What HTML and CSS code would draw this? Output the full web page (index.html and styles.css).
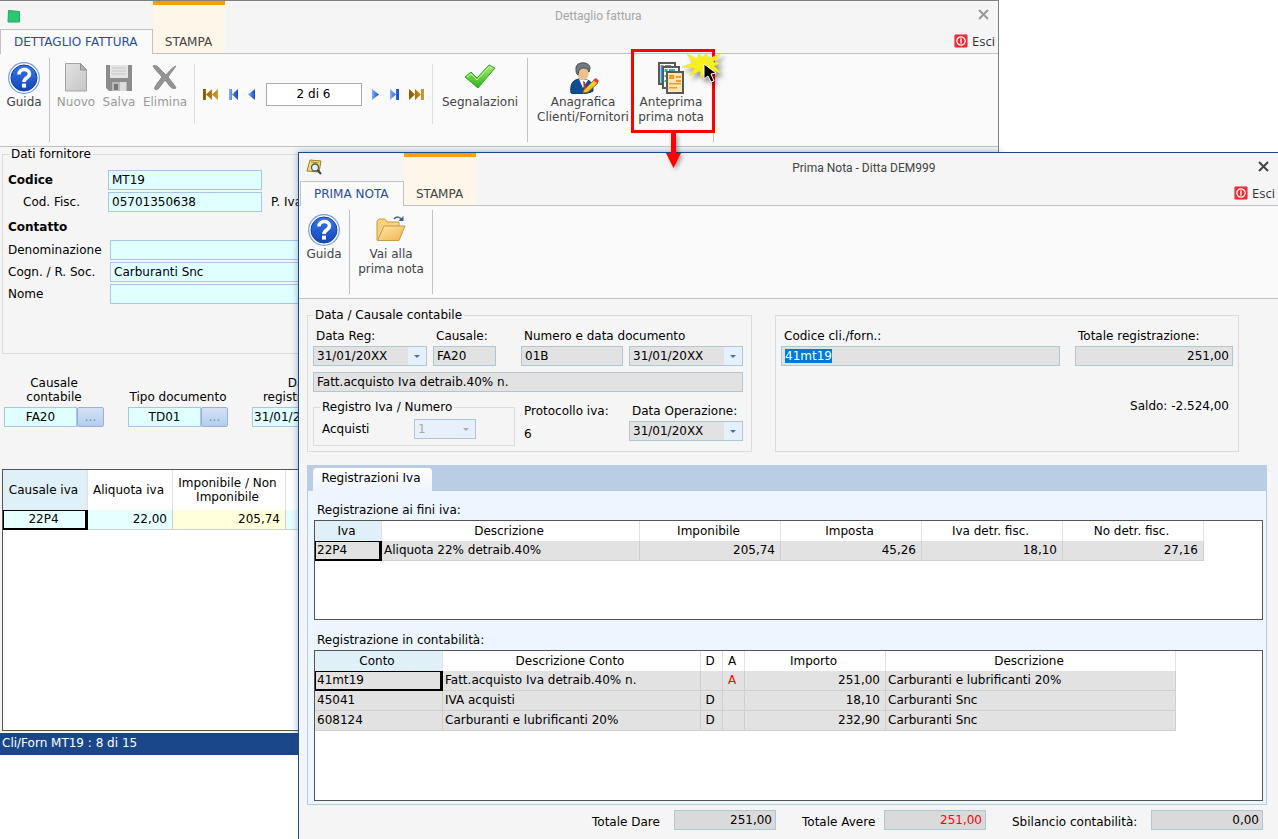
FILE: index.html
```html
<!DOCTYPE html>
<html lang="it">
<head>
    <meta charset="UTF-8">
    <meta name="viewport" content="width=device-width, initial-scale=1.0">
    <title>Prima Nota - Ditta DEM999</title>
    <link rel="stylesheet" href="styles.css">
</head>
<body>
<svg class="defs" width="0" height="0" aria-hidden="true">
    <defs>
        <linearGradient id="blueBall" x1="0" y1="0" x2="0" y2="1">
            <stop offset="0" stop-color="#3a78e6"/><stop offset="1" stop-color="#1144bd"/>
        </linearGradient>
        <linearGradient id="greyDoc" x1="0" y1="0" x2="1" y2="1">
            <stop offset="0" stop-color="#e2e2e2"/><stop offset="1" stop-color="#c6c6c6"/>
        </linearGradient>
        <linearGradient id="green" x1="0" y1="0" x2="0" y2="1">
            <stop offset="0" stop-color="#a5ec6c"/><stop offset="1" stop-color="#2db51c"/>
        </linearGradient>
        <linearGradient id="navBlue" x1="0" y1="0" x2="1" y2="0">
            <stop offset="0" stop-color="#7db0ff"/><stop offset="1" stop-color="#1348c8"/>
        </linearGradient>
        <linearGradient id="navGold" x1="0" y1="0" x2="1" y2="0">
            <stop offset="0" stop-color="#8a5800"/><stop offset="1" stop-color="#d79a26"/>
        </linearGradient>
        <linearGradient id="folder" x1="0" y1="0" x2="1" y2="1">
            <stop offset="0" stop-color="#ffe9a8"/><stop offset="1" stop-color="#f0b350"/>
        </linearGradient>
        <symbol id="i-help" viewBox="0 0 32 32">
            <circle cx="16" cy="16" r="15.3" fill="#fff" stroke="#6f9be6" stroke-width="1.2"/>
            <circle cx="16" cy="16" r="13" fill="url(#blueBall)" stroke="#173f9e" stroke-width="1"/>
            <path d="M11 12.500c0-6.500 10.500-6.500 10.500-.5 0 4-5.500 3.500-5.500 8" fill="none" stroke="#fff" stroke-width="3.600"/>
            <rect x="14" y="21.600" width="4" height="4" fill="#fff"/>
        </symbol>
        <symbol id="i-power" viewBox="0 0 14 14">
            <rect x=".5" y=".5" width="13" height="13" rx="1.5" fill="#ee2a30" stroke="#e58a8c"/>
            <circle cx="7" cy="7" r="4.2" fill="none" stroke="#fff" stroke-width="1.2"/>
            <path d="M7 4.5v5" stroke="#fff" stroke-width="1.4"/>
        </symbol>
        <symbol id="i-close" viewBox="0 0 11 11">
            <path d="M1 1l9 9M10 1l-9 9" stroke="currentColor" stroke-width="2" fill="none"/>
        </symbol>
    </defs>
</svg>

<main class="desktop">
    <!-- invoice detail -->
    <section class="window window-back">
        <header class="head">
            <div class="head-left">
                <svg class="app-icon" viewBox="0 0 16 16"><path d="M2.500 3.500L13.500 4.500V15H2z" fill="#2dc673" stroke="#25a75f"/></svg>
                <button class="tab active">DETTAGLIO FATTURA</button>
            </div>
            <button class="tab stampa">STAMPA</button>
            <h1 class="title">Dettaglio fattura</h1>
            <div class="head-right">
                <button class="close" aria-label="Chiudi"><svg><use href="#i-close"/></svg></button>
                <button class="esci"><svg><use href="#i-power"/></svg>Esci</button>
            </div>
        </header>
        <nav class="ribbon">
            <button class="tool w-guida"><svg><use href="#i-help"/></svg>Guida</button>
            <i class="sep"></i>
            <div class="group">
                <button class="tool w-nuovo" disabled>
                    <svg viewBox="0 0 32 32"><path d="M5.500 1.500h15l6 6.500v21h-21z" fill="url(#greyDoc)" stroke="#a3a3a3"/><path d="M20.500 1.500V8h6z" fill="#b5b5b5" stroke="#8d8d8d"/></svg>Nuovo
                </button>
                <button class="tool w-salva" disabled>
                    <svg viewBox="0 0 32 32"><path d="M3 3h26v26H6l-3-3z" fill="#8c8c8c"/><path d="M7 3h18v13H7z" fill="#e4e4e4"/><path d="M9 6h14M9 9h14M9 12h14" stroke="#c4c4c4"/><path d="M9 20h15v9H9z" fill="#b9b9b9"/><path d="M11 22h4v6h-4z" fill="#777"/><path d="M17 20h6v9h-6z" fill="#dcdcdc"/></svg>Salva
                </button>
                <button class="tool w-elimina" disabled>
                    <svg viewBox="0 0 32 32"><path d="M4 4c3-1 5 0 7 3l6 6c4-5 7-8 10-9-3 4-6 8-8 11 3 4 6 7 8 11-3 1-5 0-7-3l-4-5c-3 4-5 7-7 9-2 1-4 1-3-2 2-4 5-7 7-10C10 11 6 8 4 4z" fill="#949494" stroke="#888"/></svg>Elimina
                </button>
            </div>
            <i class="sep light"></i>
            <div class="pager">
                <button aria-label="Primo"><svg width="15" height="13"><path d="M0 1h3v11H0zM3 6.500l6-5.500v11zM9 6.500L15 1v11z" fill="url(#navGold)"/></svg></button>
                <button aria-label="Indietro"><svg width="9" height="13"><path d="M0 1h3v11H0zM3 6.500L9 1v11z" fill="url(#navBlue)"/></svg></button>
                <button aria-label="Precedente"><svg width="7" height="13"><path d="M0 6.500L7 1v11z" fill="url(#navBlue)"/></svg></button>
                <input type="text" value="2 di 6" aria-label="Posizione">
                <button aria-label="Successivo"><svg width="7" height="13"><path d="M7 6.500L0 1v11z" fill="url(#navBlue)"/></svg></button>
                <button aria-label="Avanti"><svg width="9" height="13"><path d="M9 1H6v11h3zM6 6.500L0 1v11z" fill="url(#navBlue)"/></svg></button>
                <button aria-label="Ultimo"><svg width="15" height="13"><path d="M15 1h-3v11h3zM12 6.500L6 1v11zM6 6.500L0 1v11z" fill="url(#navGold)"/></svg></button>
            </div>
            <i class="sep light"></i>
            <button class="tool w-segnala">
                <svg viewBox="0 0 32 32"><path d="M1 15l6-5 6 6L25 3l6 3-17 20z" fill="url(#green)" stroke="#33a11f"/><path d="M3 15l4-3 6 6L25 5l3 1" fill="none" stroke="#d5fab8"/></svg>Segnalazioni
            </button>
            <i class="sep"></i>
            <button class="tool w-anagrafica">
                <svg viewBox="0 0 32 32"><path d="M4 31c-1-8 1-13 8-14l8 1c5 1 6 6 6 11-4 3-18 4-22 2z" fill="#0e4f93" stroke="#0a335f"/><path d="M12 17l4 9 5-8z" fill="#fff"/><path d="M16 19l2 1 1 6-2 2z" fill="#c62d2d"/><path d="M10 8c0-7 12-7 12 0 0 6-2 10-6 10s-6-4-6-10z" fill="#efc18a"/><path d="M9 7c-1-8 14-8 14-1l-1 4c-1-4-4-4-7-4l-3 2-1 5c-2-1-2-4-2-6z" fill="#6f7a82" stroke="#454e54"/><path d="M17 28L28 17l3 4-10 9-5 1z" fill="#f6c534" stroke="#a0720d"/><path d="M26 18l3-2 3 3-2 2z" fill="#e03a3a"/></svg>Anagrafica<br>Clienti/Fornitori
            </button>
            <button class="tool w-anteprima">
                <svg viewBox="0 0 32 32"><path d="M4 1h16v21H4z" fill="#fff" stroke="#58595b" stroke-width="2"/><path d="M5.500 3h3v18h-3zM10 3h6v2h-6z" fill="#3b9be0"/><path d="M8 5h16v21H8z" fill="#fff" stroke="#58595b" stroke-width="2"/><path d="M9.500 7h3v3h-3zM9.500 13h3v2h-3zM9.500 18h3v2h-3zM14 7h6v2h-6z" fill="#35b57b"/><path d="M12 10h16v21H12z" fill="#fde3ae" stroke="#58595b" stroke-width="2"/><path d="M14 13h5v4h-5zM21 14h5v2h-5zM21 18h5v2h-5zM14 21h12v1.500H14zM14 25h8v1.500h-8z" fill="#f79b1f"/></svg>Anteprima<br>prima nota
            </button>
            <i class="sep"></i>
        </nav>
        <div class="back-body">
            <fieldset class="box fornitore">
                <legend>Dati fornitore</legend>
                <div class="supplier">
                    <label class="strong" for="codice">Codice</label>
                    <input class="aqua" id="codice" value="MT19"><span></span>
                    <label class="indent" for="fisc">Cod. Fisc.</label>
                    <input class="aqua" id="fisc" value="05701350638"><span>P. Iva</span>
                </div>
                <div class="strong contatto">Contatto</div>
                <div class="contact">
                    <label for="denom">Denominazione</label>
                    <input class="aqua" id="denom">
                    <label for="cogn">Cogn. / R. Soc.</label>
                    <input class="aqua" id="cogn" value="Carburanti Snc">
                    <label for="nome">Nome</label>
                    <input class="aqua" id="nome">
                </div>
            </fieldset>
            <div class="doc-row">
                <div class="doc-field">
                    <label for="causale">Causale<br>contabile</label>
                    <div class="pick"><input class="aqua" id="causale" value="FA20"><button>...</button></div>
                </div>
                <div class="doc-field">
                    <label for="tipo">Tipo documento</label>
                    <div class="pick"><input class="aqua" id="tipo" value="TD01"><button>...</button></div>
                </div>
                <div class="doc-field">
                    <label for="datareg">Data<br>registrazione</label>
                    <div class="pick"><input class="aqua date" id="datareg" value="31/01/20XX"></div>
                </div>
            </div>
            <div class="grid back-grid">
                <table>
                    <tr><th class="sel c85">Causale iva</th><th class="c85">Aliquota iva</th><th class="c113">Imponibile / Non Imponibile</th><th class="c113"></th></tr>
                    <tr class="aqua-row"><td class="mid current">22P4</td><td class="num">22,00</td><td class="num yellow">205,74</td><td></td></tr>
                </table>
            </div>
        </div>
        <footer class="status">Cli/Forn MT19 : 8 di 15</footer>
    </section>

    <!-- journal entry preview -->
    <section class="window window-front">
        <header class="head">
            <div class="head-left">
                <svg class="app-icon" viewBox="0 0 16 16"><path d="M4 1l11 1-2 11L1 12z" fill="#f3dd78" stroke="#9b7e22"/><path d="M5 3l8 1" stroke="#a68a31"/><circle cx="9" cy="8.500" r="3.500" fill="#e2f1fb" stroke="#555" stroke-width="1.300"/><path d="M11.500 11L15 15" stroke="#444" stroke-width="2"/></svg>
                <button class="tab active">PRIMA NOTA</button>
            </div>
            <button class="tab stampa">STAMPA</button>
            <h1 class="title">Prima Nota - Ditta DEM999</h1>
            <div class="head-right">
                <button class="close" aria-label="Chiudi"><svg><use href="#i-close"/></svg></button>
                <button class="esci"><svg><use href="#i-power"/></svg>Esci</button>
            </div>
        </header>
        <nav class="ribbon">
            <button class="tool w-guida"><svg><use href="#i-help"/></svg>Guida</button>
            <i class="sep"></i>
            <button class="tool w-vai">
                <svg viewBox="0 0 32 32"><path d="M2 26V7l2-2h6l2 3h12v5" fill="#f8d27c" stroke="#c99a48"/><path d="M2.500 26.500L9 12h21l-6 14.500z" fill="url(#folder)" stroke="#c99a48"/><path d="M19 5c3-3 6-2 7 0" fill="none" stroke="#3d6185" stroke-width="1.500"/><path d="M28.500 2v5h-5z" fill="#3d6185"/></svg>Vai alla<br>prima nota
            </button>
            <i class="sep"></i>
        </nav>
        <div class="front-body">
            <div class="panels">
                <fieldset class="box causale-box">
                    <legend>Data / Causale contabile</legend>
                    <div class="entry">
                        <div class="field"><label for="f-reg">Data Reg:</label><span class="drop"><select id="f-reg"><option>31/01/20XX</option></select></span></div>
                        <div class="field short"><label for="f-cau">Causale:</label><input id="f-cau" value="FA20" readonly></div>
                        <div class="field two">
                            <label for="f-num">Numero e data documento</label>
                            <input id="f-num" value="01B" readonly>
                            <span class="drop"><select aria-label="Data documento"><option>31/01/20XX</option></select></span>
                        </div>
                        <input class="full" value="Fatt.acquisto Iva detraib.40% n." aria-label="Descrizione causale" readonly>
                        <fieldset class="box registro">
                            <legend>Registro Iva / Numero</legend>
                            <div class="registro-row"><label for="f-registro">Acquisti</label><span class="drop off"><select id="f-registro" disabled><option>1</option></select></span></div>
                        </fieldset>
                        <div class="field low"><span class="lbl">Protocollo iva:</span><output>6</output></div>
                        <div class="field low"><label for="f-op">Data Operazione:</label><span class="drop"><select id="f-op"><option>31/01/20XX</option></select></span></div>
                    </div>
                </fieldset>
                <div class="box conto-box">
                    <div class="conto-row">
                        <div class="field wide"><label for="f-cli">Codice cli./forn.:</label><input id="f-cli" value="41mt19" readonly></div>
                        <div class="field tot"><label for="f-tot">Totale registrazione:</label><input class="num" id="f-tot" value="251,00" readonly></div>
                    </div>
                    <div class="saldo">Saldo: -2.524,00</div>
                </div>
            </div>

            <div class="tabs"><button>Registrazioni Iva</button></div>
            <div class="tab-panel">
                <h2>Registrazione ai fini iva:</h2>
                <div class="grid iva-grid">
                    <table>
                        <tr><th class="sel c67">Iva</th><th class="c258">Descrizione</th><th class="c141">Imponibile</th><th class="c141">Imposta</th><th class="c141">Iva detr. fisc.</th><th class="c141">No detr. fisc.</th></tr>
                        <tr><td class="current">22P4</td><td>Aliquota 22% detraib.40%</td><td class="num">205,74</td><td class="num">45,26</td><td class="num">18,10</td><td class="num">27,16</td></tr>
                    </table>
                </div>
                <h2>Registrazione in contabilità:</h2>
                <div class="grid conti-grid">
                    <table>
                        <tr><th class="sel c128">Conto</th><th class="c258">Descrizione Conto</th><th class="c22">D</th><th class="c22">A</th><th class="c141">Importo</th><th class="c290">Descrizione</th></tr>
                        <tr><td class="current">41mt19</td><td>Fatt.acquisto Iva detraib.40% n.</td><td></td><td class="flag red">A</td><td class="num">251,00</td><td>Carburanti e lubrificanti 20%</td></tr>
                        <tr><td>45041</td><td>IVA acquisti</td><td class="flag">D</td><td></td><td class="num">18,10</td><td>Carburanti Snc</td></tr>
                        <tr><td>608124</td><td>Carburanti e lubrificanti 20%</td><td class="flag">D</td><td></td><td class="num">232,90</td><td>Carburanti Snc</td></tr>
                    </table>
                </div>
            </div>
            <div class="totals">
                <div><label for="t-dare">Totale Dare</label><input class="num" id="t-dare" value="251,00" readonly></div>
                <div><label for="t-avere">Totale Avere</label><input class="num red" id="t-avere" value="251,00" readonly></div>
                <div class="last"><label for="t-sbil">Sbilancio contabilità:</label><input class="num" id="t-sbil" value="0,00" readonly></div>
            </div>
        </div>
    </section>

    <!-- click marker over the ribbon -->
    <div class="marker">
        <svg class="burst" viewBox="0 0 44 40">
            <path d="M7 3l10 5 2-6 3 5 5-5 1 6 14-6-9 9 8 1-7 3 7 7-10-3 0 8-5-6-5 6-1-7-11 5 6-8-13-1 11-4z" fill="#f8f01c" stroke="#eadc1a" stroke-width=".5"/>
            <path d="M24 13v15l4-3 3 6 3-1-3-7 5-1z" fill="#000" stroke="#fff"/>
        </svg>
        <svg class="arrow" viewBox="0 0 16 36"><path d="M6 0h5v20h5L8.500 35 1 20h5z" fill="#f00"/></svg>
    </div>
</main>
<script>
    document.getElementById('f-cli').focus();
    document.getElementById('f-cli').select();
</script>
</body>
</html>
```
FILE: styles.css
```css
* {
    box-sizing: border-box;
}
body {
    margin: 0;
    font-family: "DejaVu Sans", Verdana, sans-serif;
    font-size: 12px;
    line-height: 15px;
    color: #000;
    background-color: #fff;
}
input, button, select {
    font: inherit;
    color: inherit;
    margin: 0;
}
button {
    padding: 0;
    border: none;
    background: none;
}
.defs {
    position: absolute;
}
.desktop {
    position: relative;
    height: 100vh;
    overflow: hidden;
}

/* windows */
.window {
    position: absolute;
    display: flex;
    flex-direction: column;
    background-color: #f5f5f5;
}
.window-back {
    left: 0;
    top: 0;
    width: 999px;
    height: 755px;
    border-top: 1px solid #808080;
    border-right: 1px solid #808080;
}
.window-front {
    left: 298px;
    top: 152px;
    right: 0;
    bottom: 0;
    border-top: 1px solid #1b4a8c;
    border-left: 1px solid #1b4a8c;
}
/* the glow only falls on the window behind */
.window-back::after {
    content: "";
    position: absolute;
    left: 298px;
    top: 151px;
    right: -2px;
    bottom: 0;
    box-shadow: 0 0 7px rgba(40, 80, 140, 0.45);
}
.head {
    display: flex;
    height: 53px;
    background-color: #f5f5f5;
    box-shadow: inset 0 -1px #c2c2c2;
}
.window-front .head,
.window-front .ribbon {
    padding-left: 1px;
}
.head-left {
    display: flex;
    flex-direction: column;
    justify-content: space-between;
}
.app-icon {
    width: 16px;
    height: 16px;
    margin: 6px 0 0 6px;
}
.tab {
    color: #444;
}
.tab.active {
    height: 25px;
    padding: 0 14px 0 13px;
    color: #1f4e9e;
    background-color: #fafafa;
    border: 1px solid #c2c2c2;
    border-bottom: none;
}
.tab.stampa {
    width: 72px;
    height: 52px;
    padding-top: 26px;
    background-color: #fff6ea;
    border-top: 4px solid #ff9c00;
}
.title {
    flex: 1;
    margin: 0;
    padding: 7px 0 0 18px;
    font: 12px/16px Roboto, "Open Sans", sans-serif;
    text-align: center;
    color: #444;
}
.window-back .title {
    color: #a5a5a5;
}
.head-right {
    display: flex;
    flex-direction: column;
    justify-content: space-between;
    align-items: flex-end;
    padding: 8px 3px 5px 0;
}
.close {
    margin-right: 6px;
    color: #444;
}
.window-back .close {
    color: #999;
}
.close svg {
    display: block;
    width: 11px;
    height: 11px;
}
.esci {
    display: flex;
    align-items: center;
    gap: 4px;
    font: 13px/16px "Open Sans", sans-serif;
    color: #333;
}
.esci svg {
    width: 14px;
    height: 14px;
}

/* ribbon */
.ribbon {
    display: flex;
    height: 93px;
    background-color: #fafafa;
    border-bottom: 1px solid #c2c2c2;
}
.tool {
    display: flow-root;
    padding-top: 8px;
    align-self: flex-start;
    text-align: center;
    white-space: nowrap;
    color: #444;
}
.tool svg {
    display: block;
    width: 32px;
    height: 32px;
    margin: 0 auto 1px;
}
.tool:disabled {
    color: #999;
}
.sep {
    width: 1px;
    height: 84px;
    margin: 4px 0;
    background-color: #c2c2c2;
}
.sep.light {
    height: 60px;
    margin: 10px 0;
    background-color: #dedede;
}
.group {
    display: flex;
    width: 144px;
    padding-left: 4px;
}
.w-guida { width: 49px; padding-right: 1px; }
.w-nuovo { width: 44px; }
.w-salva { width: 42px; }
.w-elimina { width: 50px; }
.w-segnala { width: 94px; }
.w-anagrafica { width: 110px; }
.w-anteprima { width: 66px; margin-right: 9px; }
.w-vai { width: 82px; }
.pager {
    display: flex;
    align-items: center;
    justify-content: space-between;
    width: 237px;
    height: 80px;
    padding: 0 8px;
}
.pager svg {
    display: block;
}
.pager input {
    width: 96px;
    height: 23px;
    text-align: center;
    background-color: #fff;
    border: 1px solid #aaa;
}

/* shared form parts */
.box {
    margin: 0;
    border: 1px solid #dcdcdc;
}
legend {
    padding: 0 2px;
}
.strong {
    font-weight: bold;
}
.aqua {
    min-width: 0;
    height: 20px;
    padding: 0 3px;
    background-color: #e0ffff;
    border: 1px solid #a9c4e6;
}
.num {
    text-align: right;
}
.red {
    color: #f00;
}

/* invoice body */
.back-body {
    display: flex;
    flex-direction: column;
    flex: 1;
    padding: 0 2px 2px;
}
.fornitore {
    height: 207px;
    padding: 8px 5px 0;
}
.fornitore legend {
    margin-left: 1px;
}
.supplier {
    display: grid;
    grid-template-columns: 100px 154px 1fr;
    gap: 2px 0;
    align-items: center;
}
.supplier span {
    padding-left: 9px;
}
.indent {
    padding-left: 15px;
}
.contatto {
    margin: 8px 0 5px;
}
.contact {
    display: grid;
    grid-template-columns: 102px 500px;
    gap: 2px 0;
    align-items: center;
}
.doc-row {
    display: flex;
    align-items: flex-end;
    gap: 24px;
    padding: 22px 2px 0;
}
.doc-field {
    width: 100px;
    text-align: center;
    line-height: 14px;
}
.doc-field label {
    display: block;
    padding-bottom: 3px;
    white-space: nowrap;
}
.pick {
    display: flex;
}
.pick input {
    flex: 1;
    text-align: center;
}
.pick .date {
    padding: 0 1px;
    text-align: left;
}
.pick button {
    width: 27px;
    height: 20px;
    color: #7b8aa5;
    background: linear-gradient(#d3e2f6, #b4cdee);
    border: 1px solid #98b2d6;
    border-radius: 2px;
}
.status {
    height: 22px;
    padding: 3px 2px;
    color: #fff;
    background-color: #19478a;
}

/* data grids */
.grid {
    background-color: #fff;
    border: 1px solid #555;
}
.grid table {
    table-layout: fixed;
    width: 0;
    border-spacing: 0;
}
.grid th {
    height: 20px;
    padding: 0 3px 0 0;
    font-weight: normal;
    border-right: 1px solid #e2e2e2;
}
.grid td {
    height: 20px;
    padding: 0 5px 0 2px;
    white-space: nowrap;
    background-color: #e2e2e2;
    border-right: 1px solid #d0d0d0;
    border-bottom: 1px solid #d0d0d0;
}
.grid .sel {
    background-color: #dff0f8;
}
.grid .current {
    box-shadow: inset 1px 1px #000, inset -2px -1px #000;
    border-color: #000;
}
.grid .flag {
    padding: 0 3px 0 0;
    text-align: center;
}
.back-grid {
    flex: 1;
    margin-top: 42px;
}
.back-grid th {
    height: 40px;
    line-height: 14px;
}
.grid .aqua-row td {
    background-color: #e6ffff;
}
.grid .aqua-row .yellow {
    background-color: #ffffdc;
}
.grid .mid {
    text-align: center;
}
.c22 { width: 22px; }
.c67 { width: 67px; }
.c85 { width: 85px; }
.c113 { width: 113px; }
.c128 { width: 128px; }
.c141 { width: 141px; }
.c258 { width: 258px; }
.c290 { width: 290px; }

/* journal entry body */
.front-body {
    padding: 9px 11px 0 8px;
}
.front-body input,
.drop {
    height: 20px;
    background-color: #e2e2e2;
    border: 1px solid #afc6d3;
}
.front-body input {
    min-width: 0;
    width: 100%;
    padding: 0 3px;
}
.panels {
    display: flex;
    gap: 23px;
    padding-right: 28px;
}
.causale-box {
    padding: 6px 8px 5px 5px;
}
.entry {
    display: grid;
    grid-template-columns: 114px 82px 102px 114px;
    gap: 6px;
}
.field {
    display: grid;
    gap: 2px 6px;
    align-content: start;
}
.field label,
.field .lbl {
    padding-left: 3px;
    white-space: nowrap;
}
.field.short {
    width: 63px;
}
.field.two {
    grid-column: span 2;
    grid-template-columns: 102px 114px;
}
.field.two label {
    grid-column: span 2;
}
.field.low {
    padding-top: 6px;
}
.field output {
    padding: 6px 3px 0;
}
.full {
    grid-column: 1 / -1;
}
.drop {
    position: relative;
    display: block;
}
.drop select {
    display: block;
    width: 100%;
    height: 18px;
    padding: 0 3px;
    appearance: none;
    border: none;
    border-radius: 0;
    background: linear-gradient(#e6f0fd, #e6f0fd) right / 18px 18px no-repeat;
}
.drop::after {
    content: "";
    position: absolute;
    right: 6px;
    top: 8px;
    border: 3px solid transparent;
    border-top-color: #4a6fb5;
    border-bottom: none;
}
.drop.off {
    width: 62px;
    background-color: #e8f0fb;
}
.drop.off select {
    color: #aaa;
    opacity: 1;
}
.drop.off::after {
    border-top-color: #aaa;
}
.registro {
    grid-column: span 2;
    margin-top: 2px;
    padding: 4px 8px 6px;
}
.registro legend {
    margin-left: -2px;
}
.registro-row {
    display: grid;
    grid-template-columns: 92px 62px;
    align-items: center;
}
.conto-box {
    flex: 1;
    margin-top: 7px;
    padding: 13px 5px 0;
}
.conto-row {
    display: flex;
    gap: 15px;
}
.wide {
    flex: 1;
}
.tot {
    width: 158px;
}
.saldo {
    margin-top: 33px;
    padding-right: 4px;
    text-align: right;
}
#f-cli:focus {
    outline: none;
}
#f-cli::selection {
    color: #fff;
    background-color: #0078d7;
}
.tabs {
    display: flex;
    align-items: flex-end;
    height: 26px;
    margin-top: 13px;
    padding-left: 6px;
    background-color: #b9cde5;
}
.tabs button {
    width: 119px;
    height: 23px;
    padding: 0 3px 3px 0;
    background: linear-gradient(#fff, #edf5fe);
    border-radius: 4px 4px 0 0;
}
.tab-panel {
    padding: 12px 3px 3px 6px;
    background-color: #edf5fe;
    border: 1px solid #b0cbe4;
    border-top: none;
}
.tab-panel h2 {
    margin: 0 0 2px;
    padding-left: 3px;
    font-size: 12px;
    line-height: 15px;
    font-weight: normal;
}
.iva-grid {
    min-height: 100px;
    margin-bottom: 13px;
}
.conti-grid {
    min-height: 151px;
}
.totals {
    display: flex;
    justify-content: flex-end;
    gap: 26px;
    padding: 5px 4px 0 0;
}
.totals div {
    display: grid;
    grid-template-columns: 82px 102px;
    align-items: end;
    white-space: nowrap;
}
.totals .last {
    grid-template-columns: 139px 112px;
}
.totals input {
    background-color: #dadada;
}

/* marker */
.marker {
    position: absolute;
    left: 631px;
    top: 49px;
    width: 84px;
    height: 84px;
    border: 3px solid #f00;
}
.burst {
    position: absolute;
    right: -12px;
    top: -1px;
    width: 44px;
    height: 40px;
    filter: drop-shadow(3px 4px 2px rgba(0, 0, 0, 0.4));
}
.arrow {
    position: absolute;
    left: 31px;
    top: 81px;
    width: 16px;
    height: 36px;
    filter: drop-shadow(2px 2px 2px rgba(0, 0, 0, 0.35));
}
```
